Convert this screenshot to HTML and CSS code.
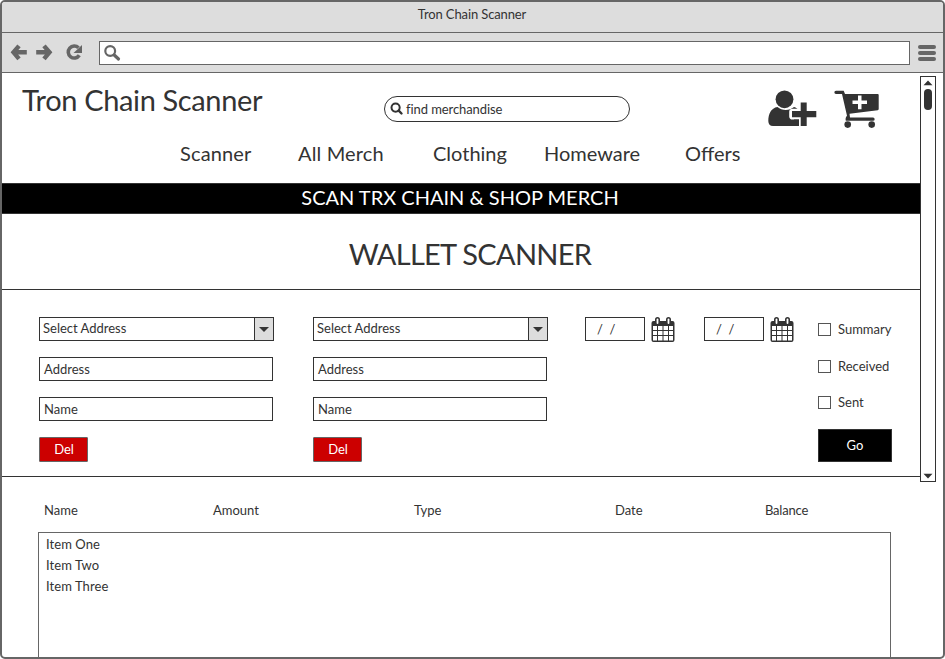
FILE: index.html
```html
<!DOCTYPE html>
<html lang="en">
<head>
<meta charset="utf-8">
<title>Tron Chain Scanner</title>
<link rel="stylesheet" href="styles.css">
</head>
<body>
<svg class="defs" width="0" height="0">
  <symbol id="calendar" viewBox="0 0 24 26">
    <path fill="#333" d="M2.500 4H4V2.500a2.500 2.500 0 0 1 5 0V4h6V2.500a2.500 2.500 0 0 1 5 0V4h1.500A2 2 0 0 1 23.500 6v17a2 2 0 0 1-2 2h-19a2 2 0 0 1-2-2V6a2 2 0 0 1 2-2z"/>
    <rect x="5.600" y="1.500" width="1.800" height="5.500" rx=".9" fill="#fff"/>
    <rect x="16.600" y="1.500" width="1.800" height="5.500" rx=".9" fill="#fff"/>
    <path fill="#fff" d="M2 9h4v4H2zM7 9h4.500v4H7zM12.500 9h4.500v4h-4.500zM18 9h4v4h-4zM2 14h4v4H2zM7 14h4.500v4H7zM12.500 14h4.500v4h-4.500zM18 14h4v4h-4zM2 19h4v4.500H2zM7 19h4.500v4.500H7zM12.500 19h4.500v4.500h-4.500zM18 19h4v4.500h-4z"/>
  </symbol>
</svg>
<div class="window">
  <div class="titlebar">Tron Chain Scanner</div>
  <div class="toolbar">
    <svg class="nav-icons" width="98" height="39" viewBox="0 0 98 39" fill="none" stroke="#666" stroke-width="4.400">
      <path d="M17 12.800L11.500 19.300l5.500 6.500M11.500 19.300h13.300"/>
      <path d="M42 12.800l5.500 6.500-5.500 6.500M47.500 19.300H34.200"/>
      <path stroke-width="3.600" d="M76.500 14.800A6 6 0 1 0 77.300 22.300"/>
      <path fill="#666" stroke="none" d="M80 12v8h-8.500z"/>
    </svg>
    <div class="urlbar">
      <svg width="18" height="18" viewBox="0 0 18 18" fill="none" stroke="#666"><circle cx="6.200" cy="6" r="4.900" stroke-width="2.200"/><path d="M10.200 10l4.300 4" stroke-width="3.200" stroke-linecap="round"/></svg>
    </div>
    <div class="menu"><i></i><i></i><i></i></div>
  </div>
  <div class="viewport">
    <main>
      <header>
        <div class="brandrow">
          <h1>Tron Chain Scanner</h1>
          <div class="search">
            <svg width="14" height="14" viewBox="0 0 14 14" fill="none" stroke="#333"><circle cx="5.600" cy="5.600" r="4.100" stroke-width="2"/><path d="M8.700 8.700l2.800 2.800" stroke-width="2.400" stroke-linecap="round"/></svg>
            <span>find merchandise</span>
          </div>
          <svg class="user" width="50" height="38" viewBox="0 0 50 38">
            <path fill="#333" d="M9.500 17C3 18 .3 24 .3 31c0 3 1.700 5 4.700 5h21c3 0 5-1.500 5-4V21c-1-2-3-3.500-5-4-4.500 4-12 4-16.500 0z"/>
            <circle cx="16.500" cy="9.300" r="8.900" fill="#333"/>
            <path fill="#fff" d="M31 10v8.800h-6.500c-2 0-3.300 1.200-3.300 3v4.600c0 2 1.300 3.200 3.300 3.200H31V38h9V10z"/>
            <path fill="#333" d="M26 29.500h5V36h-5zM32.700 12.500h6v8.600h9.600v6.200h-9.600v8.600h-6v-8.600H24v-6.200h8.700z"/>
          </svg>
          <svg class="cart" width="46" height="40" viewBox="0 0 46 40" fill="#333">
            <path d="M2 .7h7.700l1.300 3.300H43.700q1 0 1 1v14q0 1-1 1.200L15.500 23.800l.5 3.700h23a1.600 1.600 0 0 1 0 3.300H11.800c-.6-2 0-3.800 1.200-5L8 4H2a1.650 1.650 0 0 1 0-3.300z"/>
            <circle cx="13.700" cy="34.600" r="3.300"/><circle cx="37.700" cy="34.600" r="3.300"/>
            <path fill="#fff" d="M24 5.500h3.500v5h5.500v3.500h-5.500v5.200H24V14h-5.500v-3.500H24z"/>
          </svg>
        </div>
        <nav><a>Scanner</a><a>All Merch</a><a>Clothing</a><a>Homeware</a><a>Offers</a></nav>
      </header>
      <div class="banner">SCAN TRX CHAIN &amp; SHOP MERCH</div>
      <h2>WALLET SCANNER</h2>
      <form class="scanner">
        <div class="wallet">
          <div class="select"><span>Select Address</span><b></b></div>
          <div class="input">Address</div>
          <div class="input">Name</div>
          <div class="del">Del</div>
        </div>
        <div class="wallet">
          <div class="select"><span>Select Address</span><b></b></div>
          <div class="input">Address</div>
          <div class="input">Name</div>
          <div class="del">Del</div>
        </div>
        <div class="date"><div class="datebox">/&nbsp; /</div><svg width="24" height="26"><use href="#calendar"/></svg></div>
        <div class="date"><div class="datebox">/&nbsp; /</div><svg width="24" height="26"><use href="#calendar"/></svg></div>
        <div class="options">
          <label><i></i>Summary</label>
          <label><i></i>Received</label>
          <label><i></i>Sent</label>
          <div class="go">Go</div>
        </div>
      </form>
    </main>
    <div class="scrollbar">
      <svg width="10" height="6" viewBox="0 0 10 6"><path fill="#333" d="M5 .5L9.500 5.200h-9z"/></svg>
      <div class="thumb"></div>
      <svg class="down" width="10" height="6" viewBox="0 0 10 6"><path fill="#333" d="M5 5.500L9.500.8h-9z"/></svg>
    </div>
  </div>
  <section class="results">
    <div class="heads"><span>Name</span><span>Amount</span><span>Type</span><span>Date</span><span>Balance</span></div>
    <div class="list"><div>Item One</div><div>Item Two</div><div>Item Three</div></div>
  </section>
</div>
</body>
</html>
```
FILE: styles.css
```css
* { box-sizing: border-box; }
body { margin: 0; background: #fff; color: #333; font: 13px/20px Lato, sans-serif; }
svg { display: block; flex: none; }
.defs { position: absolute; }
.window { width: 945px; height: 659px; border: 2px solid #666; border-radius: 5px; overflow: hidden; display: flex; flex-direction: column; background: #fff; }
.titlebar { height: 31px; flex: none; background: #ddd; border-bottom: 1px solid #666; text-align: center; padding-top: 2px; padding-right: 1px; letter-spacing: -.12px; }
.toolbar { height: 40px; flex: none; display: flex; background: #ddd; border-bottom: 1px solid #666; }
.nav-icons { margin-right: -1px; }
.urlbar { width: 811px; height: 24px; margin-top: 8px; border: 1px solid #666; background: #fff; padding: 3px 0 0 4px; }
.menu { display: flex; flex-direction: column; gap: 2px; padding: 12px 0 0 8px; }
.menu i { width: 18px; height: 4px; border-radius: 2px; background: #666; }
.viewport { display: flex; height: 404px; flex: none; }
main { width: 918px; flex: none; border-bottom: 1px solid #333; }
header { height: 110px; }
.brandrow { display: flex; height: 65px; padding-left: 20px; }
h1, h2 { margin: 0; font-weight: 400; font-size: 29px; line-height: 36px; }
h1 { width: 362px; margin-top: 9px; white-space: nowrap; letter-spacing: -.36px; }
.search { width: 246px; height: 26px; margin-top: 23px; border: 1px solid #333; border-radius: 13px; display: flex; align-items: center; gap: 2px; padding-left: 5px; letter-spacing: -.08px; }
.user { margin: 17px 0 0 138px; }
.cart { margin: 17px 0 0 16px; }
nav { display: grid; grid-template-columns: 118px 135px 111px 141px 80px; padding-left: 178px; font-size: 20px; line-height: 30px; }
nav a:nth-child(-n+2) { letter-spacing: .15px; }
.banner { height: 31px; background: #000; color: #fff; border: 1px solid #333; border-width: 1px 0; text-align: center; font-size: 20px; line-height: 27px; padding-right: 2px; }
h2 { height: 76px; border-bottom: 1px solid #333; text-align: center; padding-top: 22px; padding-left: 18px; letter-spacing: -.72px; }
.scanner { display: flex; padding: 27px 0 0 37px; }
.wallet { width: 274px; display: flex; flex-direction: column; gap: 16px; }
.select { width: 235px; height: 24px; border: 1px solid #333; display: flex; line-height: 21px; }
.select span { flex: 1; padding-left: 3px; }
.select b { width: 19px; background: #ddd; border-left: 1px solid #333; display: flex; align-items: center; justify-content: center; }
.select b::after { content: ""; border: 5px solid transparent; border-top: 5px solid #333; border-bottom: 0; }
.input { width: 234px; height: 24px; border: 1px solid #333; padding-left: 4px; line-height: 23px; }
.del { width: 49px; height: 25px; background: #c00; border: 1px solid #666; border-radius: 1px; color: #fff; text-align: center; line-height: 23px; padding-left: 1px; }
.date { width: 119px; display: flex; gap: 6px; margin-left: -2px; margin-right: 2px; }
.datebox { width: 60px; height: 24px; border: 1px solid #333; padding-left: 11px; line-height: 22px; }
.options { margin: 2px 0 0 -7px; }
.options label { display: flex; align-items: center; height: 20px; gap: 7px; margin-bottom: 17px; }
.options label:nth-child(2) { margin-bottom: 16px; }
.options label i { width: 13px; height: 13px; border: 1px solid #555; }
.go { width: 74px; height: 33px; background: #000; border: 1px solid #333; color: #fff; text-align: center; line-height: 31px; }
.scrollbar { width: 16px; height: 406px; flex: none; margin-top: 3px; border: 1px solid #333; background: #fff; display: flex; flex-direction: column; align-items: center; padding: 3px 0 2px; }
.thumb { width: 8px; height: 21px; border-radius: 4px; background: #333; margin-top: 3px; }
.down { margin-top: auto; }
.results { padding: 23px 0 0 36px; flex: 1; display: flex; flex-direction: column; }
.heads { display: grid; grid-template-columns: 169px 201px 201px 150px 60px; padding-left: 6px; height: 32px; flex: none; }
.heads span:last-child { letter-spacing: -.2px; }
.list { width: 853px; flex: 1; border: 1px solid #666; border-bottom: 0; padding: 1px 0 0 7px; line-height: 21px; letter-spacing: .08px; }
```
